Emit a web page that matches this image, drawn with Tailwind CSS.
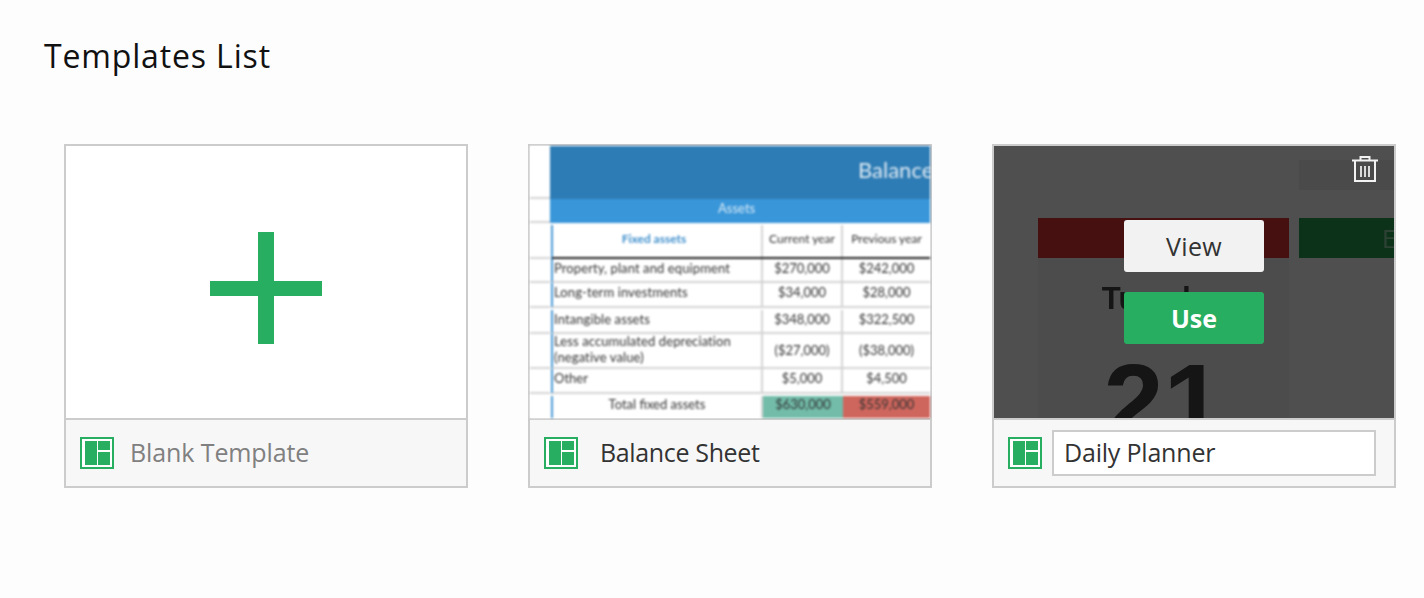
<!doctype html>
<html>
<head>
<meta charset="utf-8">
<script src="https://cdn.jsdelivr.net/npm/@tailwindcss/browser@4"></script>
</head>
<body class="bg-[#fdfdfd] font-['Open_Sans',sans-serif] h-[598px] overflow-hidden">
<h1 class="pl-[44px] pt-[38px] text-[32px] leading-[36px] text-[#111] tracking-[0.85px] h-[144px]">Templates List</h1>
<div class="flex gap-[60px] pl-[64px]">

  <div class="w-[404px] h-[344px] border-2 border-[#cccccc] flex flex-col">
    <div class="h-[272px] bg-white flex items-center justify-center shrink-0">
      <svg width="112" height="112" viewBox="0 0 112 112" class="mt-[12px]"><rect x="48" width="16" height="112" fill="#27ae60"/><rect y="49" width="112" height="15" fill="#27ae60"/></svg>
    </div>
    <div class="flex-1 border-t-2 border-[#cccccc] bg-[#f7f7f7] flex items-center pl-[14px] gap-[16px]">
      <svg width="34" height="32" viewBox="0 0 34 32"><rect x="1" y="1" width="32" height="30" fill="#fff" stroke="#27ae60" stroke-width="2"/><rect x="5" y="4" width="12" height="24" fill="#27ae60"/><rect x="18" y="4" width="12" height="9" fill="#27ae60"/><rect x="18" y="15" width="12" height="13" fill="#27ae60"/></svg>
      <span class="text-[25px] text-[#808080] tracking-[-0.1px]">Blank Template</span>
    </div>
  </div>

  <div class="w-[404px] h-[344px] border-2 border-[#cccccc] flex flex-col">
    <div class="h-[272px] bg-white shrink-0 overflow-hidden flex flex-col font-['Lato',sans-serif] text-[13px] text-[#333] blur-[0.8px]">
      <div class="flex h-[53px] shrink-0">
        <div class="w-[20px] border-b-2 border-[#d4d4d4]"></div>
        <div class="flex-1 bg-[#2e7cb5] text-[#dbe8f2] text-[22px] flex items-center pl-[308px] pb-[6px] overflow-hidden whitespace-nowrap">Balance Sheet</div>
      </div>
      <div class="flex h-[24px] shrink-0">
        <div class="w-[20px] border-b-2 border-[#d4d4d4]"></div>
        <div class="flex-1 bg-[#3996d9] text-[#d8ebf8] text-[13px] flex items-center pl-[168px] pb-[5px]">Assets</div>
      </div>
      <div class="flex h-[36px] shrink-0">
        <div class="w-[20px] border-b-2 border-[#d4d4d4]"></div>
        <div class="flex-1 flex ml-[1px] border-l-2 border-[#4a9ad6] mt-[2px] border-b-2 border-b-[#222]">
          <div class="w-[210px] border-r-2 border-[#d4d4d4] text-[#3f8fcc] font-bold text-[12px] flex items-center justify-center pr-[6px] pb-[5px]">Fixed assets</div>
          <div class="w-[80px] border-r-2 border-[#d4d4d4] flex items-center justify-center whitespace-nowrap pb-[5px] text-[12px]">Current year</div>
          <div class="flex-1 flex items-center justify-center whitespace-nowrap pb-[5px] text-[12px]">Previous year</div>
        </div>
      </div>
      <div class="flex h-[24px] shrink-0">
        <div class="w-[20px] border-b-2 border-[#d4d4d4]"></div>
        <div class="flex-1 flex ml-[1px] border-l-2 border-[#4a9ad6] border-b-2 border-b-[#d4d4d4]">
          <div class="w-[210px] border-r-2 border-[#d4d4d4] pl-[1px] pb-[3px] flex items-center tracking-[0.1px]">Property, plant and equipment</div>
          <div class="w-[80px] border-r-2 border-[#d4d4d4] pb-[3px] flex items-center justify-center">$270,000</div>
          <div class="flex-1 flex pb-[3px] items-center justify-center">$242,000</div>
        </div>
      </div>
      <div class="flex h-[25px] shrink-0">
        <div class="w-[20px] border-b-2 border-[#d4d4d4]"></div>
        <div class="flex-1 flex ml-[1px] border-l-2 border-[#4a9ad6] border-b-2 border-b-[#d4d4d4]">
          <div class="w-[210px] border-r-2 border-[#d4d4d4] pl-[1px] pb-[3px] flex items-center tracking-[0.1px]">Long-term investments</div>
          <div class="w-[80px] border-r-2 border-[#d4d4d4] pb-[3px] flex items-center justify-center">$34,000</div>
          <div class="flex-1 flex pb-[3px] items-center justify-center">$28,000</div>
        </div>
      </div>
      <div class="flex h-[26px] shrink-0">
        <div class="w-[20px] border-b-2 border-[#d4d4d4]"></div>
        <div class="flex-1 flex ml-[1px] border-l-2 border-[#4a9ad6] mt-[2px] border-b-2 border-b-[#d4d4d4]">
          <div class="w-[210px] border-r-2 border-[#d4d4d4] pl-[1px] pb-[2px] flex items-center tracking-[0.1px]">Intangible assets</div>
          <div class="w-[80px] border-r-2 border-[#d4d4d4] pb-[2px] flex items-center justify-center">$348,000</div>
          <div class="flex-1 flex pb-[2px] items-center justify-center">$322,500</div>
        </div>
      </div>
      <div class="flex h-[35px] shrink-0">
        <div class="w-[20px] border-b-2 border-[#d4d4d4]"></div>
        <div class="flex-1 flex ml-[1px] border-l-2 border-[#4a9ad6] border-b-2 border-b-[#d4d4d4]">
          <div class="w-[210px] border-r-2 border-[#d4d4d4] pl-[1px] pb-[4px] flex items-center leading-[16px] tracking-[0.1px]">Less accumulated depreciation<br>(negative value)</div>
          <div class="w-[80px] border-r-2 border-[#d4d4d4] flex items-center justify-center">($27,000)</div>
          <div class="flex-1 flex items-center justify-center">($38,000)</div>
        </div>
      </div>
      <div class="flex h-[25px] shrink-0">
        <div class="w-[20px] border-b-2 border-[#d4d4d4]"></div>
        <div class="flex-1 flex ml-[1px] border-l-2 border-[#4a9ad6] border-b-2 border-b-[#d4d4d4]">
          <div class="w-[210px] border-r-2 border-[#d4d4d4] pl-[1px] pb-[3px] flex items-center">Other</div>
          <div class="w-[80px] border-r-2 border-[#d4d4d4] pb-[3px] flex items-center justify-center">$5,000</div>
          <div class="flex-1 flex pb-[3px] items-center justify-center">$4,500</div>
        </div>
      </div>
      <div class="flex h-[24px] shrink-0">
        <div class="w-[20px]"></div>
        <div class="flex-1 flex ml-[1px] border-l-2 border-[#4a9ad6] mt-[2px]">
          <div class="w-[210px] border-r-2 border-[#d4d4d4] flex items-center justify-center pb-[4px]">Total fixed assets</div>
          <div class="w-[80px] bg-[#72bca9] flex items-center justify-center pb-[4px]">$630,000</div>
          <div class="flex-1 bg-[#cf665d] flex items-center justify-center pb-[4px]">$559,000</div>
        </div>
      </div>
    </div>
    <div class="flex-1 border-t-2 border-[#cccccc] bg-[#f7f7f7] flex items-center pl-[14px] gap-[22px]">
      <svg width="34" height="32" viewBox="0 0 34 32"><rect x="1" y="1" width="32" height="30" fill="#fff" stroke="#27ae60" stroke-width="2"/><rect x="5" y="4" width="12" height="24" fill="#27ae60"/><rect x="18" y="4" width="12" height="9" fill="#27ae60"/><rect x="18" y="15" width="12" height="13" fill="#27ae60"/></svg>
      <span class="text-[25px] text-[#333] tracking-[-0.35px]">Balance Sheet</span>
    </div>
  </div>

  <div class="w-[404px] h-[344px] border-2 border-[#cccccc] flex flex-col">
    <div class="relative h-[272px] bg-white shrink-0 overflow-hidden">
      <div class="flex pl-[44px] gap-[10px] pt-[14px]">
        <div class="w-[251px] flex flex-col items-center shrink-0">
          <div class="h-[30px]"></div>
          <div class="mt-[28px] h-[40px] w-full bg-[#e03434]"></div>
          <div class="w-full h-[174px] bg-[#f5f5f5] flex flex-col items-center font-['Liberation_Sans',sans-serif] font-bold text-[#444]">
            <div class="text-[31px] leading-[36px] mt-[23px] blur-[0.5px]">Tuesday</div>
            <div class="text-[108px] leading-[108px] mt-[31px] blur-[0.5px]">21</div>
          </div>
        </div>
        <div class="w-[96px] shrink-0">
          <div class="h-[30px] bg-[#efefef]"></div>
          <div class="mt-[28px] h-[40px] bg-[#27a151] text-white/50 text-[25px] leading-[40px] pl-[83px] blur-[0.5px] overflow-hidden whitespace-nowrap">Events</div>
        </div>
      </div>
      <div class="absolute inset-0 bg-black/[0.69]"></div>
      <svg class="absolute left-[358px] top-[9px]" width="26" height="28" viewBox="0 0 26 28" fill="none" stroke="#f2f2f2" stroke-width="2"><path d="M0 5.500H26"/><path d="M8.500 5V2H17.500V5"/><path d="M3 5.500V26H23V5.500"/><path d="M9 11V22M13 11V22M17 11V22" stroke="#d9d9d9"/></svg>
      <div class="absolute left-[130px] top-[74px] flex flex-col gap-[20px]">
        <button class="w-[140px] h-[52px] pt-[1px] rounded-[3px] bg-[#f2f2f2] text-[#333] text-[25px] tracking-[0.4px]">View</button>
        <button class="w-[140px] h-[52px] pt-[1px] rounded-[3px] bg-[#27ae60] text-white text-[25px] font-bold">Use</button>
      </div>
    </div>
    <div class="flex-1 border-t-2 border-[#cccccc] bg-[#f7f7f7] flex items-center pl-[14px] gap-[10px]">
      <svg width="34" height="32" viewBox="0 0 34 32" class="shrink-0"><rect x="1" y="1" width="32" height="30" fill="#fff" stroke="#27ae60" stroke-width="2"/><rect x="5" y="4" width="12" height="24" fill="#27ae60"/><rect x="18" y="4" width="12" height="9" fill="#27ae60"/><rect x="18" y="15" width="12" height="13" fill="#27ae60"/></svg>
      <div class="w-[324px] h-[46px] bg-white border-2 border-[#cccccc] flex items-center pl-[10px] text-[25px] text-[#333] tracking-[-0.2px]">Daily Planner</div>
    </div>
  </div>

</div>
</body>
</html>
